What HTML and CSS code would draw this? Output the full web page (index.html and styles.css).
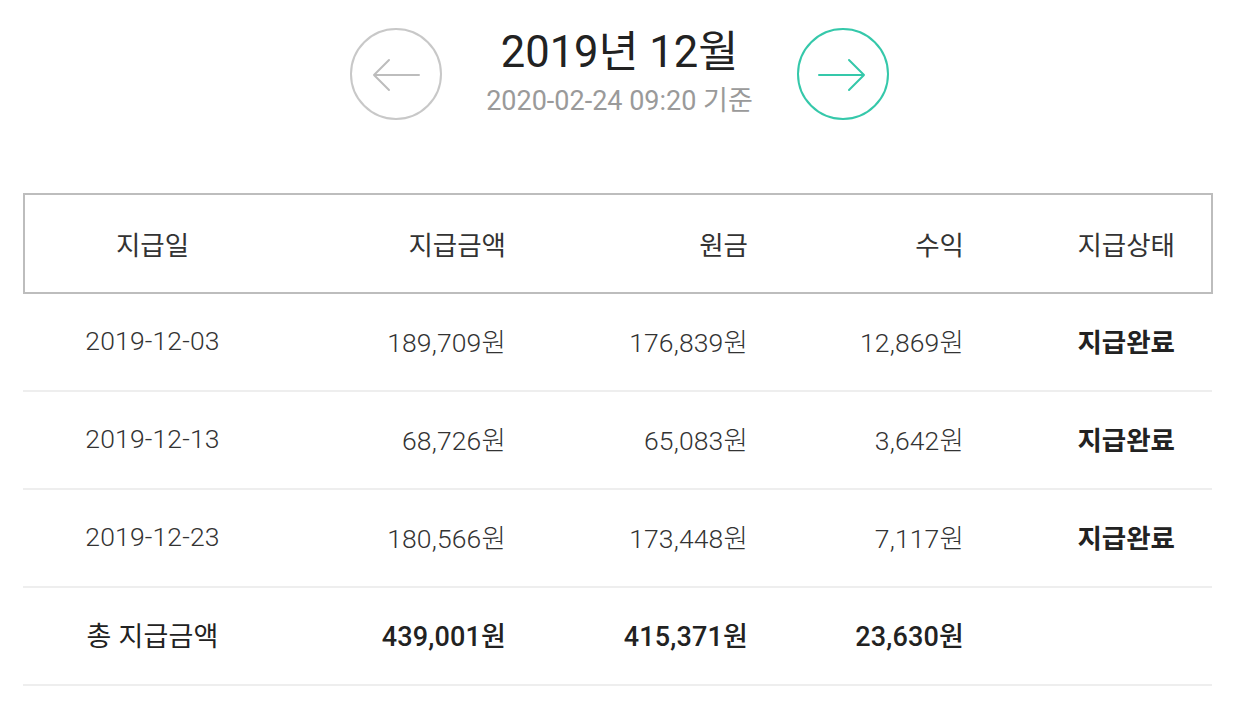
FILE: index.html
```html
<!DOCTYPE html>
<html lang="ko">
<head>
<meta charset="utf-8">
<link rel="stylesheet" href="styles.css">
</head>
<body>
<div class="page">
  <div class="month-nav">
    <button class="nav-btn prev" aria-label="이전 달">
      <svg width="92" height="92" viewBox="0 0 92 92"><circle cx="46" cy="46" r="45" fill="none" stroke="#c8c8c8" stroke-width="2"/><path d="M24 47 H69 M39 32 L24 47 L39 62" fill="none" stroke="#bdbdbd" stroke-width="2" stroke-linecap="round" stroke-linejoin="round"/></svg>
    </button>
    <div class="month-title">
      <div class="title">2019년 12월</div>
      <div class="subtitle">2020-02-24 09:20 기준</div>
    </div>
    <button class="nav-btn next" aria-label="다음 달">
      <svg width="92" height="92" viewBox="0 0 92 92"><circle cx="46" cy="46" r="45" fill="none" stroke="#35c8aa" stroke-width="2"/><path d="M22 47 H67 M52 32 L67 47 L52 62" fill="none" stroke="#35c8aa" stroke-width="2" stroke-linecap="round" stroke-linejoin="round"/></svg>
    </button>
  </div>

  <div class="table">
    <div class="row head">
      <div class="c1">지급일</div>
      <div class="cr">지급금액</div>
      <div class="cr">원금</div>
      <div class="cr">수익</div>
      <div class="cr">지급상태</div>
    </div>
    <div class="row">
      <div class="c1">2019-12-03</div>
      <div class="cr">189,709원</div>
      <div class="cr">176,839원</div>
      <div class="cr">12,869원</div>
      <div class="cr status">지급완료</div>
    </div>
    <div class="row">
      <div class="c1">2019-12-13</div>
      <div class="cr">68,726원</div>
      <div class="cr">65,083원</div>
      <div class="cr">3,642원</div>
      <div class="cr status">지급완료</div>
    </div>
    <div class="row">
      <div class="c1">2019-12-23</div>
      <div class="cr">180,566원</div>
      <div class="cr">173,448원</div>
      <div class="cr">7,117원</div>
      <div class="cr status">지급완료</div>
    </div>
    <div class="row total">
      <div class="c1">총 지급금액</div>
      <div class="cr">439,001원</div>
      <div class="cr">415,371원</div>
      <div class="cr">23,630원</div>
      <div class="cr"></div>
    </div>
  </div>
</div>
</body>
</html>
```

FILE: styles.css
```css
* { box-sizing: border-box; }
html, body { margin: 0; padding: 0; background: #fff; }
body {
  font-family: Roboto, "Noto Sans CJK KR", sans-serif;
  color: #333;
}
.page {
  width: 1241px;
  padding: 28px 0 0 23px;
}
.month-nav {
  display: flex;
  justify-content: center;
  align-items: flex-start;
  gap: 44px;
  width: 1195px;
  margin-left: -1px;
}
.nav-btn {
  width: 92px;
  height: 92px;
  padding: 0;
  border: 0;
  background: none;
  display: block;
}
.nav-btn svg { display: block; }
.month-title {
  margin-top: 1px;
  text-align: center;
}
.title {
  font-size: 43.5px;
  line-height: 48px;
  font-weight: 400;
  color: #222;
}
.subtitle {
  margin-top: 7px;
  font-size: 27px;
  line-height: 34px;
  color: #9a9a9a;
}
.table {
  width: 1189px;
  margin-top: 73px;
}
.row {
  display: grid;
  grid-template-columns: 259px 224px 242px 216px 211px;
  padding-right: 37px;
  padding-bottom: 3px;
  height: 98px;
  align-items: center;
  border-bottom: 2px solid #eeeeee;
  font-size: 26.5px;
  font-weight: 300;
  color: #333;
  letter-spacing: 0.15px;
}
.row.head {
  height: 101px;
  padding-bottom: 0;
  border-bottom: none;
  box-shadow: inset 0 0 0 2px #bdbdbd;
  font-weight: 400;
  font-size: 26.5px;
  letter-spacing: 0;
  width: 1190px;
}
.c1 { text-align: center; }
.cr { text-align: right; }
.status { font-weight: 700; color: #222; letter-spacing: 0; }
.row.total { font-weight: 500; color: #222; font-size: 27px; }
.row.total .c1 { font-weight: 400; }
```
